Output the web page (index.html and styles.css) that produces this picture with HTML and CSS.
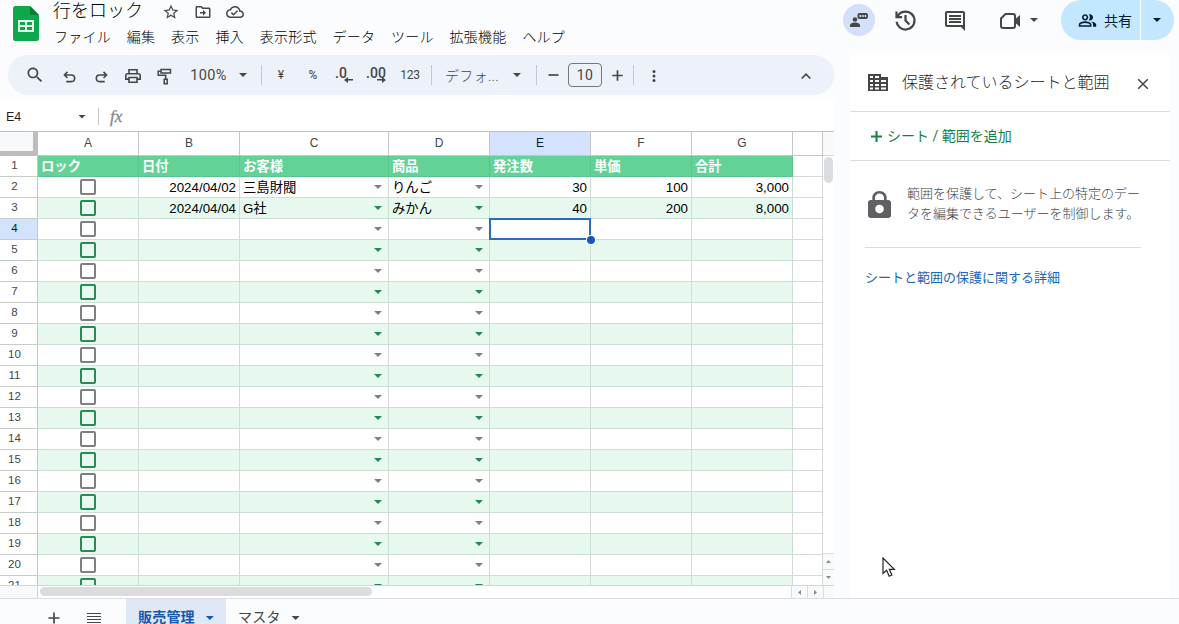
FILE: index.html
```html
<!DOCTYPE html>
<html lang="ja">
<head>
<meta charset="utf-8">
<title>行をロック</title>
<link rel="stylesheet" href="styles.css">
</head>
<body>
<div class="app">
  <header class="top">
    <svg class="logo" viewBox="0 0 26 35"><path d="M2.500 0H17l9 9v23.500a2.500 2.500 0 0 1-2.500 2.500h-21A2.500 2.500 0 0 1 0 32.500v-30A2.500 2.500 0 0 1 2.500 0z" fill="#0da84b"/><path d="M17 0l9 9h-9z" fill="#087e37"/><path d="M5 14h16v12H5zM7 16v3h5v-3zm7 0v3h5v-3zm-7 5v3h5v-3zm7 0v3h5v-3z" fill="#e4f8ea" fill-rule="evenodd"/></svg>
    <div class="heading">
      <div class="title-row">
        <span class="doc-title">行をロック</span>
        <svg class="i18 star" viewBox="0 0 24 24"><path d="M22 9.240l-7.190-.62L12 2 9.190 8.630 2 9.240l5.460 4.730L5.820 21 12 17.270 18.180 21l-1.630-7.030zM12 15.400l-3.760 2.270 1-4.280-3.320-2.880 4.380-.38L12 6.100l1.710 4.040 4.380.38-3.320 2.880 1 4.280z"/></svg>
        <svg class="i18 folder" viewBox="0 0 24 24"><path d="M20 6h-8l-2-2H4c-1.100 0-2 .9-2 2v12c0 1.100.9 2 2 2h16c1.100 0 2-.9 2-2V8c0-1.100-.9-2-2-2zm0 12H4V6h5.170l2 2H20zm-8-1 4-4-4-4v3H8v2h4z"/></svg>
        <svg class="i18" viewBox="0 0 24 24"><path d="M19.350 10.040C18.670 6.590 15.640 4 12 4 9.110 4 6.600 5.640 5.350 8.040 2.340 8.360 0 10.910 0 14c0 3.310 2.690 6 6 6h13c2.760 0 5-2.240 5-5 0-2.640-2.050-4.780-4.650-4.960zM19 18H6c-2.210 0-4-1.790-4-4 0-2.050 1.530-3.760 3.560-3.970l1.070-.11.5-.95C8.080 7.140 9.940 6 12 6c2.620 0 4.880 1.860 5.390 4.430l.3 1.500 1.530.11c1.560.1 2.780 1.410 2.780 2.960 0 1.650-1.350 3-3 3zm-9-3.820l-2.090-2.090L6.500 13.500 10 17l6.010-6.010-1.410-1.410z"/></svg>
      </div>
      <nav class="menu"><span>ファイル</span><span>編集</span><span>表示</span><span>挿入</span><span>表示形式</span><span>データ</span><span>ツール</span><span>拡張機能</span><span>ヘルプ</span></nav>
    </div>
    <div class="actions">
      <div class="presence"><svg width="20" height="16" viewBox="0 0 20 16"><circle cx="6" cy="7.500" r="2.300"/><path d="M1 15v-1.700c0-2 2.500-2.800 5-2.800s5 .8 5 2.800V15z"/><rect x="8.500" y="1" width="10.500" height="6" rx="2"/><path d="M10.500 3h1.700v2h-1.700zm2.700 0h1.500v2h-1.500zm2.500 0h1.500v2h-1.500z" fill="#d3e0fc"/></svg></div>
      <svg class="history" viewBox="0 -960 960 960"><path d="M480-120q-138 0-240.500-91.500T122-440h82q14 104 92.500 172T480-200q117 0 198.500-81.500T760-480q0-117-81.500-198.500T480-760q-69 0-129 32t-101 88h110v80H120v-240h80v94q51-64 124.500-99T480-840q75 0 140.500 28.500t114 77q48.500 48.500 77 114T840-480q0 75-28.500 140.500t-77 114q-48.500 48.500-114 77T480-120Zm112-192L440-464v-216h80v184l128 128-56 56Z"/></svg>
      <svg class="comment" viewBox="0 0 24 24"><path d="M22 4c0-1.100-.9-2-2-2H4c-1.100 0-2 .9-2 2v12c0 1.100.9 2 2 2h14l4 4zM20 4v12H4V4zM6 12h12v2H6zm0-3h12v2H6zm0-3h12v2H6z"/></svg>
      <svg class="video" viewBox="0 0 22 18"><path d="M5.500 2H13a2 2 0 0 1 2 2v10a2 2 0 0 1-2 2H3a2 2 0 0 1-2-2V6.500z" fill="none" stroke="#444746" stroke-width="2"/><path d="M15 7.500L20 3v12l-5-4.500z"/></svg>
      <i class="caret"></i>
      <div class="share"><div class="share-main"><svg viewBox="0 0 24 24" width="19" height="19"><path d="M16.670 13.130C18.040 14.060 19 15.320 19 17v3h4v-3c0-2.180-3.570-3.470-6.330-3.870zM15 12c2.210 0 4-1.790 4-4s-1.790-4-4-4c-.47 0-.91.1-1.330.24C14.500 5.270 15 6.580 15 8s-.5 2.730-1.330 3.760c.42.14.86.24 1.330.24zM9 12c2.210 0 4-1.790 4-4s-1.790-4-4-4-4 1.790-4 4 1.790 4 4 4zm0-6c1.100 0 2 .9 2 2s-.9 2-2 2-2-.9-2-2 .9-2 2-2zm0 7c-2.670 0-8 1.340-8 4v3h16v-3c0-2.660-5.330-4-8-4zm6 5H3v-.99C3.200 16.290 6.300 15 9 15s5.800 1.290 6 2z"/></svg><span>共有</span></div><div class="share-more"><i class="caret"></i></div></div>
    </div>
  </header>

  <div class="body">
    <main class="work">
      <div class="toolbar">
        <svg class="search" width="20" height="20" viewBox="0 0 24 24"><path d="M15.500 14h-.79l-.28-.27C15.410 12.590 16 11.110 16 9.500 16 5.910 13.090 3 9.500 3S3 5.910 3 9.500 5.910 16 9.500 16c1.610 0 3.090-.59 4.230-1.570l.27.28v.79l5 4.990L20.490 19zm-6 0C7.010 14 5 11.990 5 9.500S7.010 5 9.500 5 14 7.010 14 9.500 11.990 14 9.500 14z"/></svg>
        <svg class="line turn" width="13" height="12" viewBox="0 0 14 13"><path d="M4.800 1L1.500 4.300l3.300 3.300M1.500 4.300H9a3.600 3.600 0 0 1 0 7.200H3.500"/></svg>
        <svg class="line turn" width="13" height="12" viewBox="0 0 14 13"><path d="M9.200 1l3.300 3.300-3.300 3.300M12.500 4.300H5a3.600 3.600 0 0 0 0 7.200h5.500"/></svg>
        <svg class="printer" width="16" height="14" viewBox="2 3 20 18" preserveAspectRatio="none"><path d="M19 8h-1V3H6v5H5c-1.660 0-3 1.340-3 3v6h4v4h12v-4h4v-6c0-1.660-1.340-3-3-3zM8 5h8v3H8zm8 12v2H8v-4h8zm2-2v-2H6v2H4v-4c0-.55.45-1 1-1h14c.55 0 1 .45 1 1v4z"/></svg>
        <svg class="line roller" width="15" height="17" viewBox="0 0 15 17"><path d="M4 1.500h9.500v3.500H4zM4 3.200H1.200v4h7.500v3.600M7.200 11.200h3v4.600h-3z"/></svg>
        <span class="zoom">100%</span><i class="caret"></i><b class="sep"></b>
        <span class="small">¥</span><span class="small">%</span>
        <span class="dec">.0<svg width="9" height="6" viewBox="0 0 9 6"><path d="M4 0v2h5v1.600H4V6L0 3z"/></svg></span>
        <span class="dec wide">.00<svg width="9" height="6" viewBox="0 0 9 6"><path d="M5 0v2H0v1.600h5V6l4-3z"/></svg></span>
        <span class="small num">123</span><b class="sep"></b>
        <span class="font">デフォ...</span><i class="caret"></i><b class="sep"></b>
        <svg class="line" width="11" height="12" viewBox="0 0 11 12"><path d="M.5 6h10"/></svg>
        <span class="size">10</span>
        <svg class="line" width="11" height="11" viewBox="0 0 11 11"><path d="M.3 5.500h10.400M5.500 .3v10.400"/></svg><b class="sep"></b>
        <svg class="dots" width="4" height="14" viewBox="0 0 4 14"><circle cx="2" cy="2.500" r="1.500"/><circle cx="2" cy="7" r="1.500"/><circle cx="2" cy="11.500" r="1.500"/></svg>
        <svg class="line collapse" width="12" height="8" viewBox="0 0 12 8"><path d="M1.700 6.500L6 2.200l4.300 4.300"/></svg>
      </div>
      <div class="formula"><span class="ref">E4</span><i class="caret"></i><b></b><em>fx</em></div>
      <div class="sheet">
        <div class="grid-wrap">
          <div class="grid" id="grid">
            <div class="colhead corner"></div><div class="colhead">A</div><div class="colhead">B</div><div class="colhead">C</div><div class="colhead">D</div><div class="colhead selected">E</div><div class="colhead">F</div><div class="colhead">G</div><div class="colhead"></div>
          </div>
          <div class="vscroll"><div class="vhead"></div><div class="vthumb"></div><div class="vbtn up"><i></i></div><div class="vbtn down"><i></i></div></div>
        </div>
        <div class="hscroll"><div class="hcorner"></div><div class="hthumb"></div><div class="hbtn prev"><i></i></div><div class="hbtn next"><i></i></div><div class="hend"></div></div>
      </div>
    </main>
    <aside class="panel">
      <div class="panel-head">
        <svg width="20" height="17" viewBox="0 0 20 17"><path fill-rule="evenodd" d="M0 0h13v3h7v14H0zM2 2v2h3V2zm5 0v2h4V2zM2 6v2h3V6zm5 0v2h4V6zm6 0v2h5V6zM2 10v2h3v-2zm5 0v2h4v-2zm6 0v2h5v-2zM2 13.500v2h3v-2zm5 0v2h4v-2zm6 0v2h5v-2z"/></svg>
        <h2>保護されているシートと範囲</h2>
        <svg class="line close" width="12" height="12" viewBox="0 0 12 12"><path d="M1.200 1.200l9.600 9.600M10.800 1.200L1.200 10.800"/></svg>
      </div>
      <div class="add"><svg width="11" height="11" viewBox="0 0 11 11"><path d="M5.500 0v11M0 5.500h11" stroke="#188045" stroke-width="2"/></svg><span>シート / 範囲を追加</span></div>
      <div class="info">
        <svg width="23" height="27" viewBox="4 1 16 21" preserveAspectRatio="none"><path d="M18 8h-1V6c0-2.760-2.240-5-5-5S7 3.240 7 6v2H6c-1.100 0-2 .9-2 2v10c0 1.100.9 2 2 2h12c1.100 0 2-.9 2-2V10c0-1.100-.9-2-2-2zm-6 10.300c-1.700 0-3-1.500-3-3.300s1.300-3.300 3-3.300 3 1.500 3 3.300-1.300 3.300-3 3.300zM15.100 8H8.900V6c0-1.710 1.390-3.100 3.100-3.100s3.100 1.390 3.100 3.100z"/></svg>
        <p>範囲を保護して、シート上の特定のデー<br>タを編集できるユーザーを制御します。</p>
      </div>
      <a class="learn">シートと範囲の保護に関する詳細</a>
    </aside>
  </div>

  <footer class="tabs">
    <svg class="line plus" width="12" height="12" viewBox="0 0 12 12"><path d="M.5 6h11M6 .5v11"/></svg>
    <svg class="list" width="14" height="10" viewBox="0 0 14 10" shape-rendering="crispEdges"><path d="M0 0h14v1H0zM0 3h14v1H0zM0 6h14v1H0zM0 9h14v1H0z"/></svg>
    <div class="tab active"><span>販売管理</span><i class="caret"></i></div>
    <div class="tab"><span>マスタ</span><i class="caret"></i></div>
  </footer>
</div>
<svg class="pointer" width="14" height="21" viewBox="0 0 14 21"><path d="M1 1v15.500l3.600-3.300 2.600 6 2.700-1.200-2.600-5.700h5z" fill="#fff" stroke="#222" stroke-width="1.200"/></svg>
<script src="script.js"></script>
</body>
</html>
```

FILE: styles.css
```css
* { box-sizing: border-box; }
body { margin: 0; background: #fbfcfe; font-family: Roboto, "Noto Sans CJK JP", sans-serif; font-weight: 400; color: #1f1f1f; overflow: hidden; }
svg { display: block; flex: none; fill: #444746; }
.line { fill: none; stroke: #444746; stroke-width: 1.7; }
.app { width: 1179px; height: 624px; display: flex; flex-direction: column; overflow: hidden; }
.caret { display: block; flex: none; width: 8px; height: 4px; background: #444746; clip-path: polygon(0 0, 100% 0, 50% 100%); }

.top { height: 55px; flex: none; display: flex; padding-left: 13px; }
.logo { width: 26px; height: 35px; margin-top: 6px; }
.heading { margin-left: 14px; width: 540px; }
.title-row { display: flex; align-items: center; height: 24px; }
.doc-title { font-size: 18px; line-height: 22px; width: 91px; margin-top: -3px; font-weight: 300; white-space: nowrap; color: #000; }
.i18 { width: 18px; height: 18px; }
.star { margin-left: 18px; }
.folder { margin: 0 14px; }
.menu { display: flex; gap: 15.8px; font-size: 14px; letter-spacing: .25px; line-height: 20px; padding: 3px 0 0 1px; white-space: nowrap; font-weight: 300; color: #000; }
.actions { display: flex; align-items: center; height: 40px; margin-left: 250px; }
.presence { width: 32px; height: 32px; border-radius: 50%; background: #d3e0fc; display: flex; align-items: center; justify-content: center; }
.history { width: 27px; height: 27px; margin-left: 17px; }
.comment { width: 24px; height: 24px; margin-left: 24px; margin-top: 2px; }
.video { width: 22px; height: 18px; margin-left: 33px; margin-top: 2px; margin-right: 8px; }
.share { display: flex; gap: 1px; margin-left: 23px; width: 113px; height: 40px; }
.share svg { fill: #001d35; }
.share .caret { background: #001d35; }
.share-main, .share-more { background: #c2e7ff; display: flex; align-items: center; }
.share-main { width: 79px; border-radius: 20px 0 0 20px; padding-left: 17px; gap: 7px; font-size: 14px; color: #001d35; }
.share-main span { margin-top: -1px; }
.share-more { width: 33px; border-radius: 0 20px 20px 0; padding-left: 12px; }

.body { display: flex; height: 543px; flex: none; }
.work { width: 834px; }
.toolbar { height: 40px; margin-left: 8px; background: #ecf1fa; border-radius: 20px; display: grid; align-items: center; justify-items: center; color: #444746;
  grid-template-columns: 54px 14px 50px 14px 50px 37px 32px 5px 34px 30px 26px 44px 24px 18px 64px 26px 12px 22px 42px 22px 10px 32px 164px; }
.turn { margin-top: 3px; }
.printer { margin-top: 1px; }
.roller { margin: 2px 2px 0 0; stroke-width: 1.5; }
.dots { margin-top: 1px; }
.zoom { font-size: 14.500px; letter-spacing: .3px; white-space: nowrap; }
.sep { width: 1px; height: 20px; background: #c4c8ce; }
.small { font-size: 12px; }
.num { letter-spacing: -.2px; }
.dec { position: relative; font-size: 14px; font-weight: 500; line-height: 18px; margin-top: -5px; }
.dec svg { position: absolute; right: -6px; top: 13px; }
.dec.wide svg { right: 0; }
.font { font-size: 14px; font-weight: 300; white-space: nowrap; letter-spacing: .3px; }
.size { width: 34px; height: 24px; border: 1px solid #747775; border-radius: 4px; font-size: 14px; line-height: 22px; text-align: center; letter-spacing: .3px; }
.collapse { margin-left: 108px; margin-top: 1px; }
.formula { height: 36px; display: flex; align-items: center; padding: 7px 0 0 6px; font-family: "Liberation Sans", sans-serif; font-size: 12.500px; background: linear-gradient(#fbfcfe, #fff 10px); }
.ref { width: 72px; }
.formula b { width: 1px; height: 17px; background: #c7c7c7; margin-left: 12px; }
.formula em { margin-left: 11px; margin-top: 1px; color: #848789; font: italic 17px "Liberation Serif", serif; -webkit-text-stroke: .3px #848789; }

.sheet { width: 834px; border-top: 1px solid #c0c0c0; background: #fff; }
.grid-wrap { display: flex; height: 453px; overflow: hidden; }
.grid { display: grid; width: 823px; grid-template-columns: 38px 101px 101px 149px 101px 101px 101px 101px 30px; grid-template-rows: 24px; grid-auto-rows: 21px; font-family: "Liberation Sans", "Noto Sans CJK JP", sans-serif; flex: none; }
.colhead { border-right: 1px solid #c4c7c5; border-bottom: 1px solid #c4c7c5; font-size: 12px; color: #444746; text-align: center; line-height: 23px; }
.colhead.selected { background: #d3e3fd; color: #001d35; }
.corner { border-right: 5px solid #bdbdbd; border-bottom: 5px solid #bdbdbd; background: #f8f9fa; }
.rownum { border-right: 1px solid #c4c7c5; border-bottom: 1px solid #c9cccc; font-size: 11.500px; line-height: 19px; text-align: center; padding-right: 8px; color: #444746; }
.rownum.selected { background: #d3e3fd; color: #001d35; }
.cell { position: relative; border-right: 1px solid #d5dad8; border-bottom: 1px solid #d5dad8; padding: 0 3px; font-size: 13.330px; line-height: 21px; white-space: nowrap; color: #000; display: flex; align-items: center; min-width: 0; height: 21px; }
.head { background: #63d297; border-color: #5cc58d; color: #fff; font-weight: 700; }
.band { background: #e7f9ef; border-color: #ccdfd5; }
.right { justify-content: flex-end; }
.center { justify-content: center; }
.check { width: 16px; height: 16px; border: 2px solid #808080; border-radius: 2px; }
.band .check { border-color: #2b8a55; }
.drop { margin-left: auto; margin-right: 3px; width: 8px; height: 4px; background: #808080; clip-path: polygon(0 0, 100% 0, 50% 100%); }
.band .drop { background: #24885a; }
.cursor { position: absolute; inset: -1px; border: 2px solid #2a6cbd; }
.cursor::after { content: ""; position: absolute; right: -6px; bottom: -6px; width: 8px; height: 8px; border-radius: 50%; background: #1558bd; box-shadow: 0 0 0 1px #fff; }
.over { z-index: 2; }

.vscroll { width: 11px; display: flex; flex-direction: column; align-items: center; background: #fff; flex: none; }
.vhead { width: 11px; height: 24px; background: #f8f9fa; border-bottom: 1px solid #d5d5d5; }
.vthumb { width: 9px; height: 26px; margin-top: 1px; border-radius: 5px; background: #dadce0; }
.vbtn { width: 11px; height: 16px; background: #f8f9fa; border-top: 1px solid #dcdcdc; display: flex; align-items: center; justify-content: center; }
.up { margin-top: 370px; }
.vbtn i, .hbtn i { display: block; width: 5px; height: 3px; background: #8b8b8b; clip-path: polygon(50% 0, 100% 100%, 0 100%); }
.down i { transform: rotate(180deg); }
.hscroll { height: 13px; display: flex; align-items: center; border-top: 1px solid #d5d5d5; }
.hcorner { width: 38px; height: 12px; background: #f8f9fa; border-right: 1px solid #d0d0d0; }
.hthumb { width: 332px; height: 9px; margin-left: 2px; margin-bottom: 1px; border-radius: 5px; background: #dadce0; }
.hbtn { width: 16px; height: 12px; background: #f8f9fa; border-left: 1px solid #dcdcdc; display: flex; align-items: center; justify-content: center; }
.prev { margin-left: 419px; }
.prev i { transform: rotate(-90deg); }
.next i { transform: rotate(90deg); }
.hend { flex: 1; height: 12px; background: #f8f9fa; border-left: 1px solid #dcdcdc; }

.panel { width: 320px; margin-left: 16px; background: #fff; }
.panel-head { height: 57px; display: flex; align-items: center; padding: 0 0 1px 18px; border-bottom: 1px solid #dadce0; }
.panel-head h2 { margin: -3px 0 0 14px; font-size: 16px; font-weight: 300; width: 208px; white-space: nowrap; }
.close { margin-left: 27px; margin-top: 2px; stroke-width: 1.5; }
.add { height: 49px; border-bottom: 1px solid #dadce0; display: flex; align-items: center; gap: 5px; padding-left: 21px; font-size: 14px; color: #188045; }
.add span { margin-top: -2px; }
.info { display: flex; gap: 16px; margin: 0 29px 0 15px; padding: 23px 0 0 3px; height: 87px; border-bottom: 1px solid #dadce0; }
.info svg { fill: #5f6063; margin-top: 7px; }
.info p { margin: 0; font-size: 13px; line-height: 20px; font-weight: 300; color: #444648; white-space: nowrap; }
.learn { display: block; margin: 20px 0 0 15px; font-size: 13px; line-height: 20px; color: #1967b8; }

.tabs { height: 26px; flex: none; border-top: 1px solid #dadce0; display: flex; }
.plus { margin: 13px 0 0 48px; }
.list { margin: 14px 25px 0 27px; }
.tab { display: flex; align-items: flex-start; height: 25px; width: 100px; padding: 8px 0 0 12px; gap: 11px; font-size: 14px; line-height: 20px; letter-spacing: .2px; color: #444746; }
.tab span { height: 17px; }
.tab .caret { margin-top: 9px; }
.tab.active { background: #dfe8f7; color: #1558b0; font-weight: 700; }
.tab.active .caret { background: #1558b0; }
.pointer { position: absolute; left: 882px; top: 557px; }
```

FILE: script.js
```js
const grid = document.getElementById('grid');
const headers = ['ロック', '日付', 'お客様', '商品', '発注数', '単価', '合計'];
const data = {
  2: ['', '2024/04/02', '三島財閥', 'りんご', '30', '100', '3,000'],
  3: ['', '2024/04/04', 'G社', 'みかん', '40', '200', '8,000']
};

function add(className, html) {
  const el = document.createElement('div');
  el.className = className;
  el.innerHTML = html;
  grid.appendChild(el);
}

for (let row = 1; row <= 21; row++) {
  add(row === 4 ? 'rownum selected' : 'rownum', row);
  for (let col = 0; col < 7; col++) {
    if (row === 1) {
      add('cell head', headers[col]);
      continue;
    }
    const band = row % 2 ? ' band' : '';
    const value = data[row] ? data[row][col] : '';
    if (col === 0) add('cell center' + band, '<i class="check"></i>');
    else if (col === 2 || col === 3) add('cell' + band, value + '<i class="drop"></i>');
    else if (row === 4 && col === 4) add('cell over', '<i class="cursor"></i>');
    else add('cell right' + band, value);
  }
  add('cell', '');
}
```
